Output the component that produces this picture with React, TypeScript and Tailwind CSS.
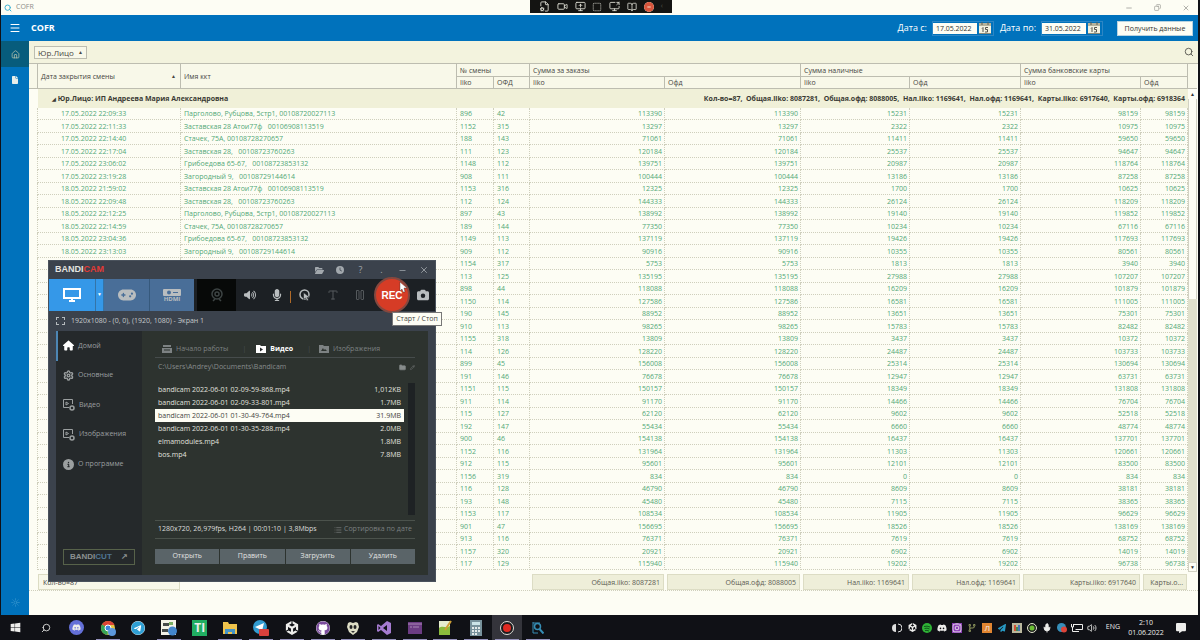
import type { ReactNode } from "react";
import {
  BookOpen, Copy, FileCog, Folder, House, Image, List, Menu, Mic, Minus,
  MonitorUp, MousePointerClick, Pencil, Search, Settings, Sun, Type, Video, Volume2, X, Pause, SquareDashed, ScreenShare,
} from "lucide-react";
import {
  FaCircleMinus, FaClock, FaCodeBranch, FaDiscord, FaFile, FaFolderOpen, FaGamepad, FaGithub, FaMicrophone,
  FaPaperPlane, FaTelegram, FaUnity, FaWindows, FaCamera, FaVolumeHigh, FaMessage, FaInstagram, FaHouse, FaCircleInfo,
} from "react-icons/fa6";

const ADDR: Record<string, string> = {
  a: "Парголово, Рубцова, 5стр1, 00108720027113",
  b: "Заставская 28 Атои77ф   00106908113519",
  c: "Стачек, 75А, 00108728270657",
  d: "Заставская 28,   00108723760263",
  e: "Грибоедова 65-67,   00108723853132",
  f: "Загородный 9,   00108729144614",
};

type Row = [string, string, string, string, string, string, string];

const ROWS: Row[] = [
  ["17.05.2022 22:09:33", "a", "896", "42", "113390", "15231", "98159"],
  ["17.05.2022 22:11:33", "b", "1152", "315", "13297", "2322", "10975"],
  ["17.05.2022 22:14:40", "c", "188", "143", "71061", "11411", "59650"],
  ["17.05.2022 22:17:04", "d", "111", "123", "120184", "25537", "94647"],
  ["17.05.2022 23:06:02", "e", "1148", "112", "139751", "20987", "118764"],
  ["17.05.2022 23:19:28", "f", "908", "111", "100444", "13186", "87258"],
  ["18.05.2022 21:59:02", "b", "1153", "316", "12325", "1700", "10625"],
  ["18.05.2022 22:09:48", "d", "112", "124", "144333", "26124", "118209"],
  ["18.05.2022 22:12:25", "a", "897", "43", "138992", "19140", "119852"],
  ["18.05.2022 22:14:59", "c", "189", "144", "77350", "10234", "67116"],
  ["18.05.2022 23:04:36", "e", "1149", "113", "137119", "19426", "117693"],
  ["18.05.2022 23:13:03", "f", "909", "112", "90916", "10355", "80561"],
  ["", "", "1154", "317", "5753", "1813", "3940"],
  ["", "", "113", "125", "135195", "27988", "107207"],
  ["", "", "898", "44", "118088", "16209", "101879"],
  ["", "", "1150", "114", "127586", "16581", "111005"],
  ["", "", "190", "145", "88952", "13651", "75301"],
  ["", "", "910", "113", "98265", "15783", "82482"],
  ["", "", "1155", "318", "13809", "3437", "10372"],
  ["", "", "114", "126", "128220", "24487", "103733"],
  ["", "", "899", "45", "156008", "25314", "130694"],
  ["", "", "191", "146", "76678", "12947", "63731"],
  ["", "", "1151", "115", "150157", "18349", "131808"],
  ["", "", "911", "114", "91170", "14466", "76704"],
  ["", "", "115", "127", "62120", "9602", "52518"],
  ["", "", "192", "147", "55434", "6660", "48774"],
  ["", "", "900", "46", "154138", "16437", "137701"],
  ["", "", "1152", "116", "131964", "11303", "120661"],
  ["", "", "912", "115", "95601", "12101", "83500"],
  ["", "", "1156", "319", "834", "0", "834"],
  ["", "", "116", "128", "46790", "8609", "38181"],
  ["", "", "193", "148", "45480", "7115", "38365"],
  ["", "", "1153", "117", "108534", "11905", "96629"],
  ["", "", "901", "47", "156695", "18526", "138169"],
  ["", "", "913", "116", "76371", "7619", "68752"],
  ["", "", "1157", "320", "20921", "6902", "14019"],
  ["", "", "117", "129", "115940", "19202", "96738"],
];

const FILES = [
  ["bandicam 2022-06-01 02-09-59-868.mp4", "1,012KB"],
  ["bandicam 2022-06-01 02-09-33-801.mp4", "1.7MB"],
  ["bandicam 2022-06-01 01-30-49-764.mp4", "31.9MB"],
  ["bandicam 2022-06-01 01-30-35-288.mp4", "2.0MB"],
  ["elmamodules.mp4", "1.8MB"],
  ["bos.mp4", "7.8MB"],
];

function WindowBar() {
  return (
    <div className="relative flex h-[15px] items-center bg-[#fdfdf4] pl-[3px] text-[7px] text-[#8d8d88]">
      <Search className="h-2 w-2 text-[#3fb4d4]" strokeWidth={3} />
      <span className="ml-1">COFR</span>
      <div className="ml-auto flex gap-[21px] pr-2">
        <button aria-label="Свернуть"><Minus size={8} /></button>
        <button aria-label="Восстановить"><Copy size={7} className="-scale-x-100" /></button>
        <button aria-label="Закрыть"><X size={8} /></button>
      </div>
      <div className="absolute top-0 left-[529px] flex h-[13px] w-[142px] items-center justify-between bg-[#141412] px-[9px] text-[#d9d9cf]">
        <FileCog size={11} />
        <Video size={11} />
        <MonitorUp size={11} />
        <SquareDashed size={10} />
        <ScreenShare size={11} />
        <BookOpen size={10} />
        <FaCircleMinus size={10} className="rounded-full bg-[#f6ddc8] text-[#d8553c]" />
        <span className="text-[#55554c]">‹</span>
      </div>
    </div>
  );
}

function Calendar() {
  return (
    <svg viewBox="0 0 12 12" className="h-3 w-3">
      <path d="M0 2h12v10H0z" fill="#f3f1df" />
      <path d="M0 1h12v3H0z" fill="#b5b39b" />
      <path d="M3 0v3M9 0v3" stroke="#5f5f52" />
      <path d="M0 11.500h12" stroke="#8a8a78" />
      <path d="M3 6.500l1-1V10M9 5.500H6.500v2h2V10H6" fill="none" stroke="#55554c" />
    </svg>
  );
}

function DateField({ id, label, value }: { id: string; label: string; value: string }) {
  return (
    <div className="flex items-center gap-[5px]">
      <label htmlFor={id} className="text-[9px] text-white">{label}</label>
      <div className="flex h-[15px] items-center gap-[2px] border border-[#2d86c4] pr-[2px]">
        <input id={id} defaultValue={value} className="h-[11px] w-11 bg-[#fdfdf4] pl-[3px] text-[7px] leading-[11px] text-[#333330]" />
        <button aria-label={"Календарь " + label}><Calendar /></button>
      </div>
    </div>
  );
}

function AppHeader() {
  return (
    <header className="flex h-[26px] items-center bg-[#0072bc] pr-[5px] pl-2 text-white">
      <button aria-label="Меню"><Menu size={12} /></button>
      <h1 className="ml-[10px] text-[9px] font-bold">COFR</h1>
      <div className="ml-auto flex items-center gap-[6px]">
        <DateField id="from" label="Дата с:" value="17.05.2022" />
        <DateField id="to" label="Дата по:" value="31.05.2022" />
        <button className="ml-2 h-[15px] w-[76px] border border-[#b9d3e0] bg-[#fdfdf4] text-[7px] leading-[13px] text-[#33332f]">Получить данные</button>
      </div>
    </header>
  );
}

const head = "border-r border-b border-[#bdbdb0] pr-0 pl-[3px] text-left font-normal";
const cell = "border-r border-b border-dotted border-[#cfcfbc] p-0 whitespace-pre";
const num = "border-r border-b border-dotted border-[#cfcfbc] p-0 pr-[2px] text-right";

function Total({ children }: { children?: ReactNode }) {
  return (
    <td className="p-0 pr-px pl-[2px]">
      <div className="h-4 overflow-hidden border border-[#dcdcc4] bg-[#eeeed9] px-[3px] text-right text-ellipsis whitespace-nowrap leading-[15px] text-[#5c5c52]">{children}</div>
    </td>
  );
}

function DataTable() {
  return (
    <div className="min-w-0 flex-1">
      <table className="w-full table-fixed border-separate border-spacing-0 text-[7px] leading-[11px] text-[#45453f]">
        <colgroup>
          <col className="w-[9px]" /><col className="w-[143px]" /><col />
          <col className="w-[37px]" /><col className="w-9" /><col className="w-[135px]" /><col className="w-[136px]" />
          <col className="w-[109px]" /><col className="w-[111px]" /><col className="w-[120px]" /><col className="w-[47px]" />
        </colgroup>
        <thead className="bg-[#f8f8e9]">
          <tr className="h-[13px]">
            <th rowSpan={2} className="border-r border-b border-[#bdbdb0] p-0" />
            <th rowSpan={2} className={head}>
              <span className="flex items-center justify-between pr-1">Дата закрытия смены <i className="text-[5px] not-italic">▲</i></span>
            </th>
            <th rowSpan={2} className={head}>Имя ккт</th>
            <th colSpan={2} className={head}>№ смены</th>
            <th colSpan={2} className={head}>Сумма за заказы</th>
            <th colSpan={2} className={head}>Сумма наличные</th>
            <th colSpan={2} className={head}>Сумма банковские карты</th>
          </tr>
          <tr className="h-3">
            {["Iiko", "ОФД", "Iiko", "Офд", "Iiko", "Офд", "Iiko", "Офд"].map((t, i) => <th key={i} className={head}>{t}</th>)}
          </tr>
        </thead>
        <tbody className="bg-[#fdfdf4] text-[#52a877]">
          <tr className="h-[19px] bg-[#f0f0d8] font-bold text-[#3a3a34]">
            <td className="bg-[#fdfdf4] p-0" />
            <td colSpan={2} className="p-0 pl-[14px]"><span className="text-[5px]">◢</span> Юр.Лицо: ИП Андреева Мария Александровна</td>
            <td colSpan={8} className="p-0 pr-[3px] text-right whitespace-pre">Кол-во=87,  Общая.iiko: 8087281,  Общая.офд: 8088005,  Нал.iiko: 1169641,  Нал.офд: 1169641,  Карты.iiko: 6917640,  Карты.офд: 6918364</td>
          </tr>
          {ROWS.map(([date, addr, iiko, ofd, sum, cash, card], i) => (
            <tr key={i} className="h-[13px] even:h-3">
              <td className="border-r border-dotted border-[#cfcfbc] p-0" />
              <td className={cell + " pl-[23px]"}>{date}</td>
              <td className={cell + " pl-[3px]"}>{ADDR[addr]}</td>
              <td className={cell + " pl-[3px]"}>{iiko}</td>
              <td className={cell + " pl-[3px]"}>{ofd}</td>
              <td className={num}>{sum}</td>
              <td className={num}>{sum}</td>
              <td className={num}>{cash}</td>
              <td className={num}>{cash}</td>
              <td className={num}>{card}</td>
              <td className={num}>{card}</td>
            </tr>
          ))}
        </tbody>
        <tfoot>
          <tr className="h-5 align-bottom">
            <td className="p-0" />
            <td className="p-0 pr-px"><div className="h-4 border border-[#dcdcc4] bg-[#f8f8e9] px-1 leading-[15px]">Кол-во=87</div></td>
            <td className="p-0" colSpan={3} />
            <Total>Общая.iiko: 8087281</Total>
            <Total>Общая.офд: 8088005</Total>
            <Total>Нал.iiko: 1169641</Total>
            <Total>Нал.офд: 1169641</Total>
            <Total>Карты.iiko: 6917640</Total>
            <Total>Карты.о...</Total>
          </tr>
        </tfoot>
      </table>
    </div>
  );
}

function ScrollBar() {
  return (
    <div className="flex w-[9px] flex-col text-center text-[5px] leading-[10px] text-[#333]">
      <div className="h-[25px] border-b border-[#bdbdb0] bg-[#f8f8e9]" />
      <button aria-label="Вверх" className="h-[10px] bg-[#fdfdf4]">▲</button>
      <div className="h-[200px] border-x border-[#d2d2c4] bg-[#fdfdf4]" />
      <div className="flex-1 bg-[#e0e0cc]" />
      <button aria-label="Вниз" className="h-[10px] border border-[#d2d2c4] bg-[#fdfdf4] leading-[8px]">▼</button>
      <div className="h-[18px]" />
    </div>
  );
}

function Tool({ label, className, children }: { label: string; className: string; children: ReactNode }) {
  return <button aria-label={label} className={"flex shrink-0 items-center justify-center " + className}>{children}</button>;
}

function FrameGear() {
  return (
    <svg viewBox="0 0 12 12" className="h-3 w-3" fill="none" stroke="currentColor">
      <path d="M6 8.500H.5v-8h9V5M3 3l2.500 1.500L3 6z" />
      <circle cx="9" cy="9" r="2" strokeWidth="1.500" />
    </svg>
  );
}

const NAV = [
  { t: "Домой", i: <FaHouse size={11} className="text-white" /> },
  { t: "Основные", i: <Settings size={11} strokeWidth={3} /> },
  { t: "Видео", i: <FrameGear /> },
  { t: "Изображения", i: <FrameGear /> },
  { t: "О программе", i: <FaCircleInfo size={11} /> },
];

function Recorder() {
  return (
    <section aria-label="Bandicam" className="absolute top-[260px] left-12 w-[388px] border border-[#4a525c] bg-[#3b424c] pb-[6px] text-[7px] text-[#c6c9cb]">
      <div className="flex h-[18px] items-center pr-[6px] pl-[6px]">
        <span className="font-['Liberation_Sans'] text-[9px] font-bold text-[#e4e4e0]">BANDI<span className="text-[#e23a36]">CAM</span></span>
        <div className="ml-auto flex items-center gap-3 text-[#a2a8ad]">
          <button aria-label="Папка"><FaFolderOpen size={9} /></button>
          <button aria-label="История"><FaClock size={8} /></button>
          <button aria-label="Справка" className="w-[9px] text-[9px]">?</button>
          <button aria-label="Трей" className="w-[9px] text-[9px]">.</button>
          <button aria-label="Свернуть"><Minus size={9} /></button>
          <button aria-label="Закрыть"><X size={10} /></button>
        </div>
      </div>
      <div className="relative flex h-8 bg-[#1c2024] text-[#b9bdbf]">
        <Tool label="Экран" className="w-[46px] bg-[#3598e8] text-white">
          <svg viewBox="0 0 18 14" className="h-[14px] w-[18px]" fill="none" stroke="currentColor" strokeWidth="2"><path d="M1 1h16v9H1zM6 13h6M9 10v3" /></svg>
        </Tool>
        <Tool label="Режимы" className="w-[9px] border-x border-[#3474a8] bg-[#3598e8] text-[5px] text-white">▼</Tool>
        <Tool label="Игра" className="w-[46px] border-r border-[#36597c] bg-[#496e98]"><FaGamepad size={18} /></Tool>
        <Tool label="HDMI" className="w-11 flex-col bg-[#496e98]">
          <svg viewBox="0 0 18 7" className="h-[7px] w-[18px]"><rect width="18" height="7" rx="1" fill="currentColor" /><circle cx="6" cy="3.500" r="2" fill="#496e98" /><path d="M10 3h5v1h-5z" fill="#496e98" /></svg>
          <span className="text-[6px] leading-[6px] font-bold">HDMI</span>
        </Tool>
        <Tool label="Веб-камера" className="ml-[3px] w-[39px] bg-[#070908] text-[#3d4444]">
          <svg viewBox="0 0 14 14" className="h-[14px] w-[14px]" fill="none" stroke="currentColor" strokeWidth="1.500"><circle cx="7" cy="6" r="5" /><circle cx="7" cy="6" r="2" /><path d="M3 13l2-2M11 13l-2-2" /></svg>
        </Tool>
        <Tool label="Звук" className="w-[27px]"><FaVolumeHigh size={12} /></Tool>
        <Tool label="Микрофон" className="w-[27px]"><FaMicrophone size={12} /></Tool>
        <div className="mt-3 h-3 w-px bg-[#b06a28]" />
        <Tool label="Клик мыши" className="w-7">
          <svg viewBox="0 0 12 12" className="h-3 w-3"><circle cx="5.500" cy="5.500" r="4.500" fill="none" stroke="currentColor" strokeWidth="1.500" /><path d="M4.500 3.500v7l2-1.500 1.500 3 1.500-1-1.500-2.500H11z" fill="currentColor" stroke="#1c2024" strokeWidth=".6" /></svg>
        </Tool>
        <Tool label="Текст" className="w-[27px] text-[#54595c]"><Type size={12} /></Tool>
        <Tool label="Пауза" className="w-[27px] text-[#54595c]"><Pause size={12} /></Tool>
        <Tool label="Запись" className="mx-px -my-[2px] w-9 rounded-full border-2 border-[#85483f] bg-[#d63c26] font-['Liberation_Sans'] text-[10px] font-bold text-white">REC</Tool>
        <Tool label="Снимок" className="flex-1"><FaCamera size={12} /></Tool>
        <svg viewBox="0 0 8 12" className="absolute top-[2px] left-[350px] h-3 w-2"><path d="M1 1v9l2-2 1 3h2L5 7h3z" fill="#fff" stroke="#333" strokeWidth=".4" /></svg>
        <div role="tooltip" className="absolute top-[33px] left-[343px] h-[14px] w-[50px] border border-[#777] bg-[#fdfdf4] text-center text-[7px] leading-3 text-[#44443e]">Старт / Стоп</div>
      </div>
      <div className="flex h-5 items-center gap-[6px] pl-[7px]">
        <span className="h-2 w-[9px] border border-dashed border-[#b5babd]" />1920x1080 - (0, 0), (1920, 1080) - Экран 1
      </div>
      <div className="mx-[7px] flex h-[244px] bg-[#2d332f]">
        <nav className="flex w-[86px] flex-col bg-[#25292b]">
          <div className="flex h-[148px] flex-col text-[#9b9fa0]">
            {NAV.map((n, i) => (
              <button key={n.t} className={"flex flex-1 items-center gap-1 border-l-2 pl-[5px] " + (i === 0 ? "border-[#4d86b4]" : "border-transparent")}>{n.i}{n.t}</button>
            ))}
          </div>
          <button className="mt-auto mb-[10px] ml-[7px] flex h-4 w-[72px] items-center justify-between border border-[#57624a] px-[6px] font-['Liberation_Sans'] text-[8px] font-bold text-[#8b9090]">
            <span>BANDI<span className="text-[#4f7695]">CUT</span></span><span>↗</span>
          </button>
        </nav>
        <div className="flex min-w-0 flex-1 flex-col px-[13px]">
          <div className="mt-[10px] flex h-[17px] items-center border-b border-[#464c4c] pl-[7px] text-[#7d8283]">
            <button className="flex items-center gap-1">
              <svg viewBox="0 0 10 8" className="h-2 w-[10px]"><path d="M1 0h8v2H1zM0 3h10v5H0z" fill="currentColor" /><path d="M2 5h6" stroke="#2d332f" /></svg>Начало работы
            </button>
            <span className="ml-[14px] text-[#4a5050]">|</span>
            <button className="ml-[10px] flex items-center gap-1 font-bold text-white">
              <svg viewBox="0 0 10 8" className="h-2 w-[10px]"><path d="M0 0h4l1 1h5v7H0z" fill="#fff" /><path d="M4 2.500v4L7 4.500z" fill="#25292b" /></svg>Видео
            </button>
            <span className="ml-[14px] text-[#4a5050]">|</span>
            <button className="ml-2 flex items-center gap-1">
              <svg viewBox="0 0 10 8" className="h-2 w-[10px]"><path d="M0 0h4l1 1h5v7H0z" fill="currentColor" /><path d="M2 6l2-3 1 2 1-1 2 2z" fill="#2d332f" /></svg>Изображения
            </button>
          </div>
          <div className="flex h-[18px] items-center pl-[3px] text-[#878c8c]">C:\Users\Andrey\Documents\Bandicam
            <span className="ml-auto flex items-center gap-1"><Folder size={7} fill="currentColor" /><Pencil size={5} /></span>
          </div>
          <div className="mt-[7px] flex h-[132px]">
            <table className="mr-1 flex-1 self-start leading-[13px] text-[#e0e1df]">
              <tbody>
                {FILES.map(([n, s], i) => (
                  <tr key={n} className={i === 2 ? "bg-[#fdfdf4] text-[#44443e]" : ""}>
                    <td className="p-0 pl-[3px]">{n}</td><td className="p-0 pr-[3px] text-right">{s}</td>
                  </tr>
                ))}
              </tbody>
            </table>
            <div className="w-[7px] bg-[#1e2224]" />
          </div>
          <div className="mt-[5px] flex h-[19px] items-center justify-between border-y border-[#4b524c] px-[3px] text-[#dcdddb]">
            1280x720, 26,979fps, H264 | 00:01:10 | 3,8Mbps
            <button className="flex items-center gap-[2px] text-[#7b8081]"><List size={8} />Сортировка по дате</button>
          </div>
          <div className="mt-[10px] flex gap-px text-[#e2e3e2]">
            {["Открыть", "Править", "Загрузить", "Удалить"].map((t) => <button key={t} className="h-[15px] flex-1 bg-[#5a6468]">{t}</button>)}
          </div>
        </div>
      </div>
    </section>
  );
}

function ChromeLogo() {
  return (
    <svg viewBox="0 0 16 16" className="h-4 w-4">
      <circle cx="8" cy="8" r="7" fill="#e6c441" /><path d="M8 8L2 4.500A7 7 0 0 1 14.500 5H8z" fill="#da4436" /><path d="M8 8l-6-3.500A7 7 0 0 0 7.500 15z" fill="#36a456" />
      <circle cx="8" cy="8" r="3" fill="#3f84dc" stroke="#fff" /><circle cx="12" cy="12" r="4" fill="#5c98dc" />
    </svg>
  );
}

function VsLogo({ fill }: { fill: string }) {
  return <svg viewBox="0 0 16 16" className="h-4 w-4"><path fillRule="evenodd" d="M11 1l4 2v10l-4 2-6-5-3 2-1-1V5l1-1 3 2zM11 5L7 8l4 3zM2.500 6v4l2-2z" fill={fill} /></svg>;
}

const APPS: { n: string; on: boolean; i: ReactNode }[] = [
  { n: "Пуск", on: false, i: <FaWindows size={11} /> },
  { n: "Поиск", on: false, i: <Search size={10} className="-scale-x-100" /> },
  { n: "Discord", on: false, i: <span className="rounded-full bg-[#6470d8] p-[3px]"><FaDiscord size={9} /></span> },
  { n: "Chrome", on: true, i: <ChromeLogo /> },
  { n: "Telegram", on: false, i: <FaTelegram size={14} className="rounded-full bg-white text-[#2f9fd4]" /> },
  { n: "Просмотр", on: true, i: <svg viewBox="0 0 16 16" className="h-4 w-4"><path d="M0 0h15v15H0z" fill="#f2f2e8" /><path d="M2 3h6v3H2zM1 9h6v3H1z" fill="#454b4b" /><path d="M8 2h4v3H8z" fill="#79af64" /><circle cx="11.500" cy="11" r="4.500" fill="#4386cd" /></svg> },
  { n: "TI", on: false, i: <span className="flex h-4 w-[15px] items-center justify-center bg-[#20ae61] text-[12px] font-bold">TI</span> },
  { n: "Проводник", on: true, i: <svg viewBox="0 0 14 14" className="h-[14px] w-[14px]"><path d="M0 1h5l1 2h8v10H0z" fill="#efc34c" /><path d="M2 8h10v5H9v-2H5v2H2z" fill="#4694c7" /></svg> },
  { n: "Telegram чат", on: true, i: <svg viewBox="0 0 16 16" className="h-4 w-4"><circle cx="7" cy="7" r="7" fill="#329bd0" /><path d="M2 7l9-4-2 8-3-2z" fill="#fff" /><rect x="6" y="9" width="10" height="7" rx="1" fill="#d9403d" /></svg> },
  { n: "Unity", on: true, i: <FaUnity size={14} /> },
  { n: "GitHub", on: true, i: <FaGithub size={14} className="rounded-full bg-white text-[#7b4c9d]" /> },
  { n: "Git", on: true, i: <svg viewBox="0 0 14 14" className="h-[14px] w-[14px]"><path d="M2 2l2-1 3 1 3-1 2 1 1 4-2 5-4 3-4-3-2-5z" fill="#ddddc5" /><ellipse cx="5" cy="6" rx="1.500" ry="2" fill="#222" /><ellipse cx="9" cy="6" rx="1.500" ry="2" fill="#222" /><path d="M5 10h4l-2 2z" fill="#333" /></svg> },
  { n: "Visual Studio", on: true, i: <VsLogo fill="#a57bd0" /> },
  { n: "Терминал", on: true, i: <svg viewBox="0 0 14 12" className="h-3 w-[14px]"><path d="M0 0h14v12H0z" fill="#6c3c83" /><path d="M0 2h14M2 5h2M5 5h6" stroke="#a987b5" /></svg> },
  { n: "Notepad++", on: true, i: <svg viewBox="0 0 14 16" className="h-4 w-[14px]"><path d="M1 1h11v14H1z" fill="#e6edcf" /><path d="M1 8c4-3 7 1 11-2v9H1z" fill="#8abb3c" /><path d="M13 1L7 10" stroke="#cf9f34" strokeWidth="2" /></svg> },
  { n: "Калькулятор", on: true, i: <svg viewBox="0 0 12 16" className="h-4 w-3"><path d="M0 0h12v16H0z" fill="#78929c" /><path d="M2 2h8v3H2z" fill="#cbe4e8" /><path d="M2 8h2M5 8h2M8 8h2M2 11h2M5 11h2M8 11h2M2 14h2M5 14h2" stroke="#e3eaea" strokeWidth="2" /></svg> },
  { n: "Bandicam", on: true, i: <svg viewBox="0 0 14 14" className="h-[14px] w-[14px]"><circle cx="7" cy="7" r="6.500" fill="#1b1b1d" stroke="#deded8" /><circle cx="7" cy="7" r="4" fill="#e02a22" /></svg> },
  { n: "COFR", on: true, i: <svg viewBox="0 0 12 12" className="h-3 w-3" fill="none" stroke="#368db4"><path d="M1 0v11h5M1 1h7" /><circle cx="5.500" cy="4.500" r="3" strokeWidth="1.500" /><path d="M7.500 7l4 4.500" strokeWidth="2" /></svg> },
];

const TRAY: ReactNode[] = [
  <svg viewBox="0 0 10 10" className="h-[10px] w-[10px]"><path d="M4 1a4 4 0 0 0 0 8z" fill="#ddd" /><path d="M6 1a4 4 0 0 1 0 8" fill="none" stroke="#ddd" /></svg>,
  <FaUnity size={9} />,
  <svg viewBox="0 0 10 10" className="h-[10px] w-[10px]"><circle cx="5" cy="5" r="5" fill="#2fb336" /><path d="M2 3.500q3-1 6 .5M2.500 5.500q2.500-1 5 .5M3 7.500q2-.5 4 .5" fill="none" stroke="#10571a" /></svg>,
  <FaDiscord size={10} />,
  <FaInstagram size={10} className="bg-[#8e3fb8]" />,
  <FaCodeBranch size={8} className="text-[#8a925a]" />,
  <span className="flex h-[10px] w-[10px] items-center justify-center bg-[#e18531] text-[8px]">Л</span>,
  <FaPaperPlane size={8} className="text-[#289ac5]" />,
  <svg viewBox="0 0 10 10" className="h-[10px] w-[10px]"><path d="M0 0h10v10H0z" fill="#b9b79d" /><path d="M2 2h2v6H2z" fill="#d05236" /><path d="M4 4h2v4H4z" fill="#408c53" /><path d="M6 2h2v6H6z" fill="#4674b5" /></svg>,
  <svg viewBox="0 0 10 10" className="h-[10px] w-[10px]"><circle cx="5" cy="5" r="4.500" fill="#222" stroke="#e2e5cc" /><circle cx="5" cy="5" r="2.500" fill="#6cbf34" /></svg>,
  <Mic size={10} fill="currentColor" />,
  <svg viewBox="0 0 10 10" className="h-[10px] w-[10px]"><circle cx="4.500" cy="4.500" r="4.500" fill="#378fba" /><circle cx="7" cy="6.500" r="3" fill="#df4438" /></svg>,
  <svg viewBox="0 0 12 10" className="h-[10px] w-3" fill="none" stroke="currentColor"><path d="M2.500 1.500h9v5h-7M.5 1v3h2V1M1.500 4v4.500H8" /></svg>,
  <Volume2 size={10} />,
];

function TaskBar() {
  return (
    <footer className="flex h-[25px] items-stretch bg-[#101116] text-[#ededeb]">
      <div className="flex w-[553px]">
        {APPS.map((a) => (
          <button key={a.n} aria-label={a.n} className={"flex flex-1 items-center justify-center " + (a.n === "Bandicam" ? "bg-[#34343b]" : "")}>
            <span className={"flex h-full w-6 items-center justify-center border-b pt-px " + (a.on ? "border-[#9693bd]" : "border-transparent")}>{a.i}</span>
          </button>
        ))}
      </div>
      <div className="ml-auto flex items-center text-[7px]">
        {TRAY.map((t, i) => <span key={i} className="flex w-[15px] items-center justify-center">{t}</span>)}
        <span className="ml-[6px]">ENG</span>
        <div className="ml-2 w-9 text-center leading-[10px]">2:10<br />01.06.2022</div>
        <button aria-label="Уведомления" className="mr-[14px] ml-3"><FaMessage size={10} /></button>
      </div>
    </footer>
  );
}

export default function App() {
  return (
    <div className="relative flex min-h-screen flex-col bg-[#101116] font-['Open_Sans','Noto_Sans',sans-serif]">
      <div className="mr-[2px] ml-px flex flex-1 flex-col bg-[#fdfdf4]">
        <WindowBar />
        <AppHeader />
        <div className="flex flex-1">
          <aside className="flex w-7 flex-col items-center bg-[#0072bc] text-[#e8eee9]">
            <button aria-label="Главная" className="flex h-[26px] w-full items-center justify-center bg-[#075c7c]"><House size={9} className="text-[#b6c3ae]" /></button>
            <button aria-label="Отчёт" className="flex h-[26px] w-full items-center justify-center"><FaFile size={8} /></button>
            <button aria-label="Тема" className="mt-auto mb-2 text-[#3795cd]"><Sun size={9} /></button>
          </aside>
          <main className="min-w-0 flex-1">
            <div className="flex h-[23px] items-center justify-between border-b border-[#bdbdb0] bg-[#f3f3de] pr-1 pl-[5px] text-[#484842]">
              <button className="flex h-[13px] w-[53px] items-center justify-between border border-[#bdbdb0] bg-[#f8f8e9] px-[3px] text-[8px] leading-[11px]">Юр.Лицо <span className="text-[5px]">▲</span></button>
              <button aria-label="Найти"><Search size={10} /></button>
            </div>
            <div className="flex border-b border-dotted border-[#cfcfbc] pr-px">
              <DataTable />
              <ScrollBar />
            </div>
          </main>
        </div>
      </div>
      <TaskBar />
      <Recorder />
    </div>
  );
}
